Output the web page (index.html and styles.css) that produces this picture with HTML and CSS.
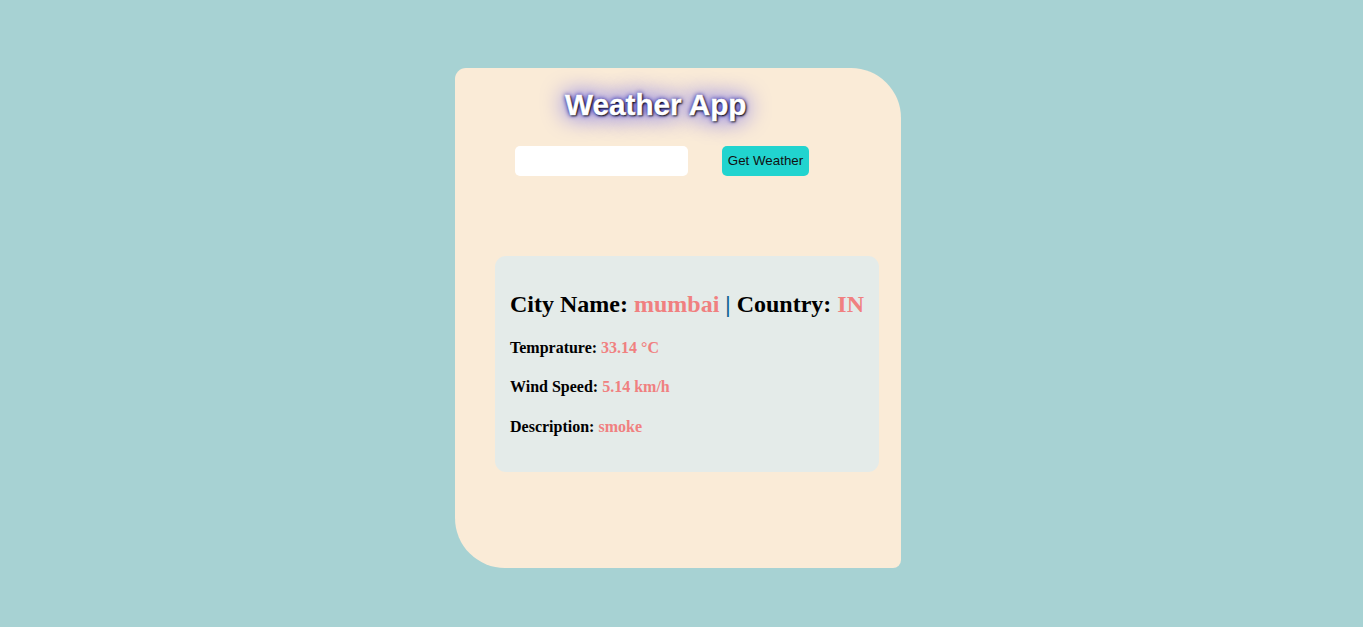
FILE: index.html
```html
<!DOCTYPE html>
<html lang="en">
<head>
<meta charset="utf-8">
<title>Weather App</title>
<link rel="stylesheet" href="styles.css">
</head>
<body>
<div class="card">
  <h1 class="title">Weather App</h1>
  <div class="search">
    <input class="city-input" type="text">
    <button class="get-btn">Get Weather</button>
  </div>
  <div class="result">
    <h2 class="city">City Name: <span class="val">mumbai</span> <span class="sep">|</span> Country: <span class="val">IN</span></h2>
    <h4 class="row">Temprature: <span class="val">33.14 °C</span></h4>
    <h4 class="row">Wind Speed: <span class="val">5.14 km/h</span></h4>
    <h4 class="row">Description: <span class="val">smoke</span></h4>
  </div>
</div>
</body>
</html>
```
FILE: styles.css
```css
html, body {
  margin: 0;
  padding: 0;
}
body {
  background: #a7d2d3;
  font-family: "Liberation Serif", "Times New Roman", serif;
  min-height: 627px;
  padding-top: 68px;
  box-sizing: border-box;
}
.card {
  margin-left: 455px;
  width: 446px;
  height: 500px;
  box-sizing: border-box;
  background: #faebd7;
  border-radius: 11px 50px 8px 50px;
  padding-top: 20px;
}
.title {
  margin: 0 0 0 110px;
  font-family: "Liberation Sans", Arial, sans-serif;
  font-weight: bold;
  font-size: 29.7px;
  line-height: 33px;
  color: #fff;
  -webkit-text-stroke: 0.4px #fff;
  text-shadow: 1px 1px 2px #000, 0 0 25px blue, 0 0 5px darkblue;
}
.search {
  display: flex;
  gap: 34px;
  margin: 25px 0 0 60px;
}
.city-input {
  width: 173px;
  height: 30px;
  box-sizing: border-box;
  border: none;
  border-radius: 5px;
  background: #fff;
  outline: none;
}
.get-btn {
  height: 30px;
  width: 87px;
  box-sizing: border-box;
  border: none;
  border-radius: 5px;
  background: #21d4cf;
  color: #111;
  font-family: "Liberation Sans", Arial, sans-serif;
  font-size: 13.33px;
  padding: 0 0 2px;
}
.result {
  margin: 80px 0 0 40px;
  width: 384px;
  height: 216px;
  box-sizing: border-box;
  background: #e4ebe9;
  border-radius: 11px;
  padding: 15px 15px;
  overflow: hidden;
}
.city {
  font-size: 24px;
  margin: 19.92px 0 21.28px;
  white-space: nowrap;
}
.row {
  font-size: 16px;
  margin: 21.28px 0;
}
.result .row + .row {
  margin-top: 20px;
}
.val {
  color: #f08080;
}
.sep {
  color: #0d5f8f;
}
```
